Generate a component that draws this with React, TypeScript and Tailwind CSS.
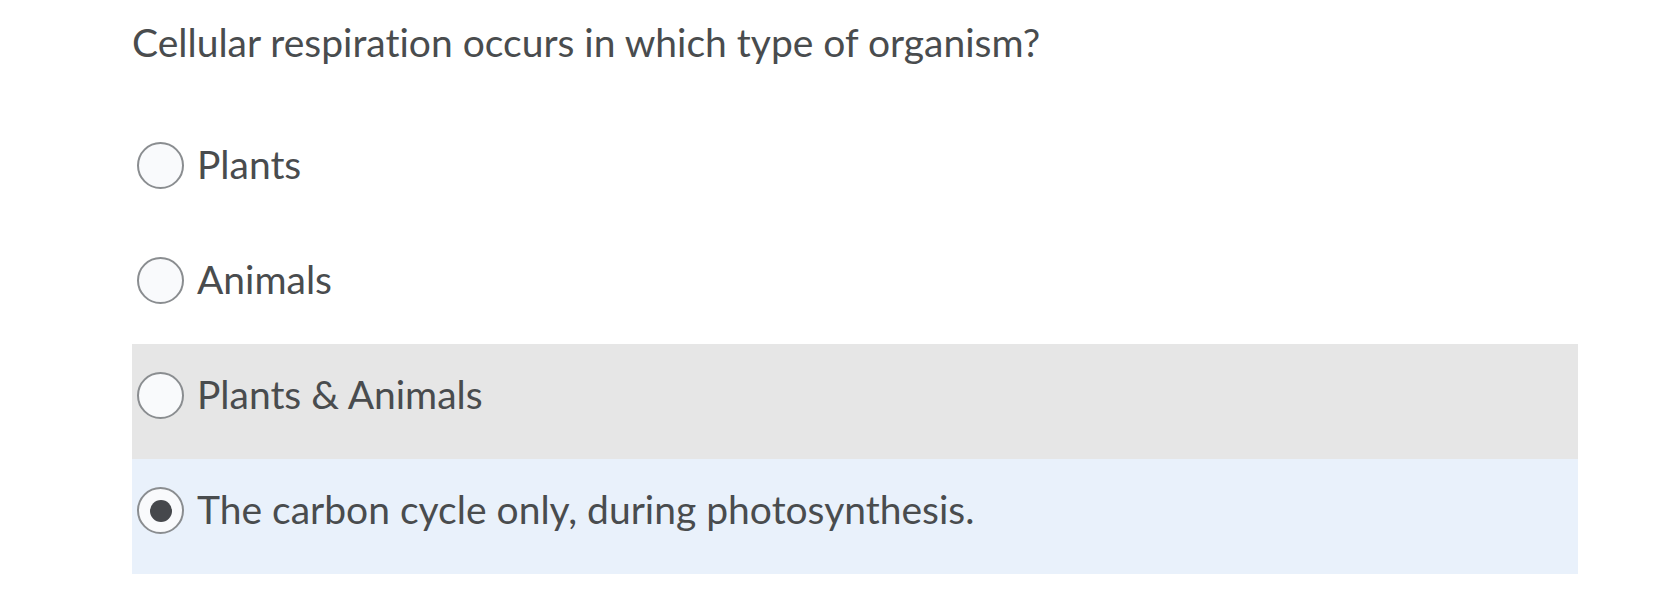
import React from "react";

const options = [
  { label: "Plants", state: "idle" },
  { label: "Animals", state: "idle" },
  { label: "Plants & Animals", state: "hover" },
  { label: "The carbon cycle only, during photosynthesis.", state: "checked" },
];

function Radio({ checked }: { checked: boolean }) {
  return (
    <span className="flex h-[47px] w-[47px] shrink-0 items-center justify-center rounded-full border-2 border-[#8a8d90] bg-[#f9fafc]">
      {checked && <span className="h-[22px] w-[22px] rounded-full bg-[#46484c]" />}
    </span>
  );
}

export default function App() {
  return (
    <div className="min-h-[596px] bg-white font-['Lato','Liberation_Sans',sans-serif] text-[#494c4e] [font-variant-ligatures:none]">
      <div className="ml-[132px] w-[1446px]">
        <p className="pt-[18px] text-[39px] leading-[48px]">
          Cellular respiration occurs in which type of organism?
        </p>
        <div className="mt-[48px]">
          {options.map((opt) => (
            <div
              key={opt.label}
              className={
                "h-[115px] pl-[5px] pt-[28px] " +
                (opt.state === "hover"
                  ? "bg-[#e6e6e6]"
                  : opt.state === "checked"
                    ? "bg-[#e9f1fb]"
                    : "bg-white")
              }
            >
              <label className="flex h-[47px] items-center gap-[13px]">
                <Radio checked={opt.state === "checked"} />
                <span className="-mt-[2px] text-[39px] leading-[47px]">{opt.label}</span>
              </label>
            </div>
          ))}
        </div>
      </div>
    </div>
  );
}
